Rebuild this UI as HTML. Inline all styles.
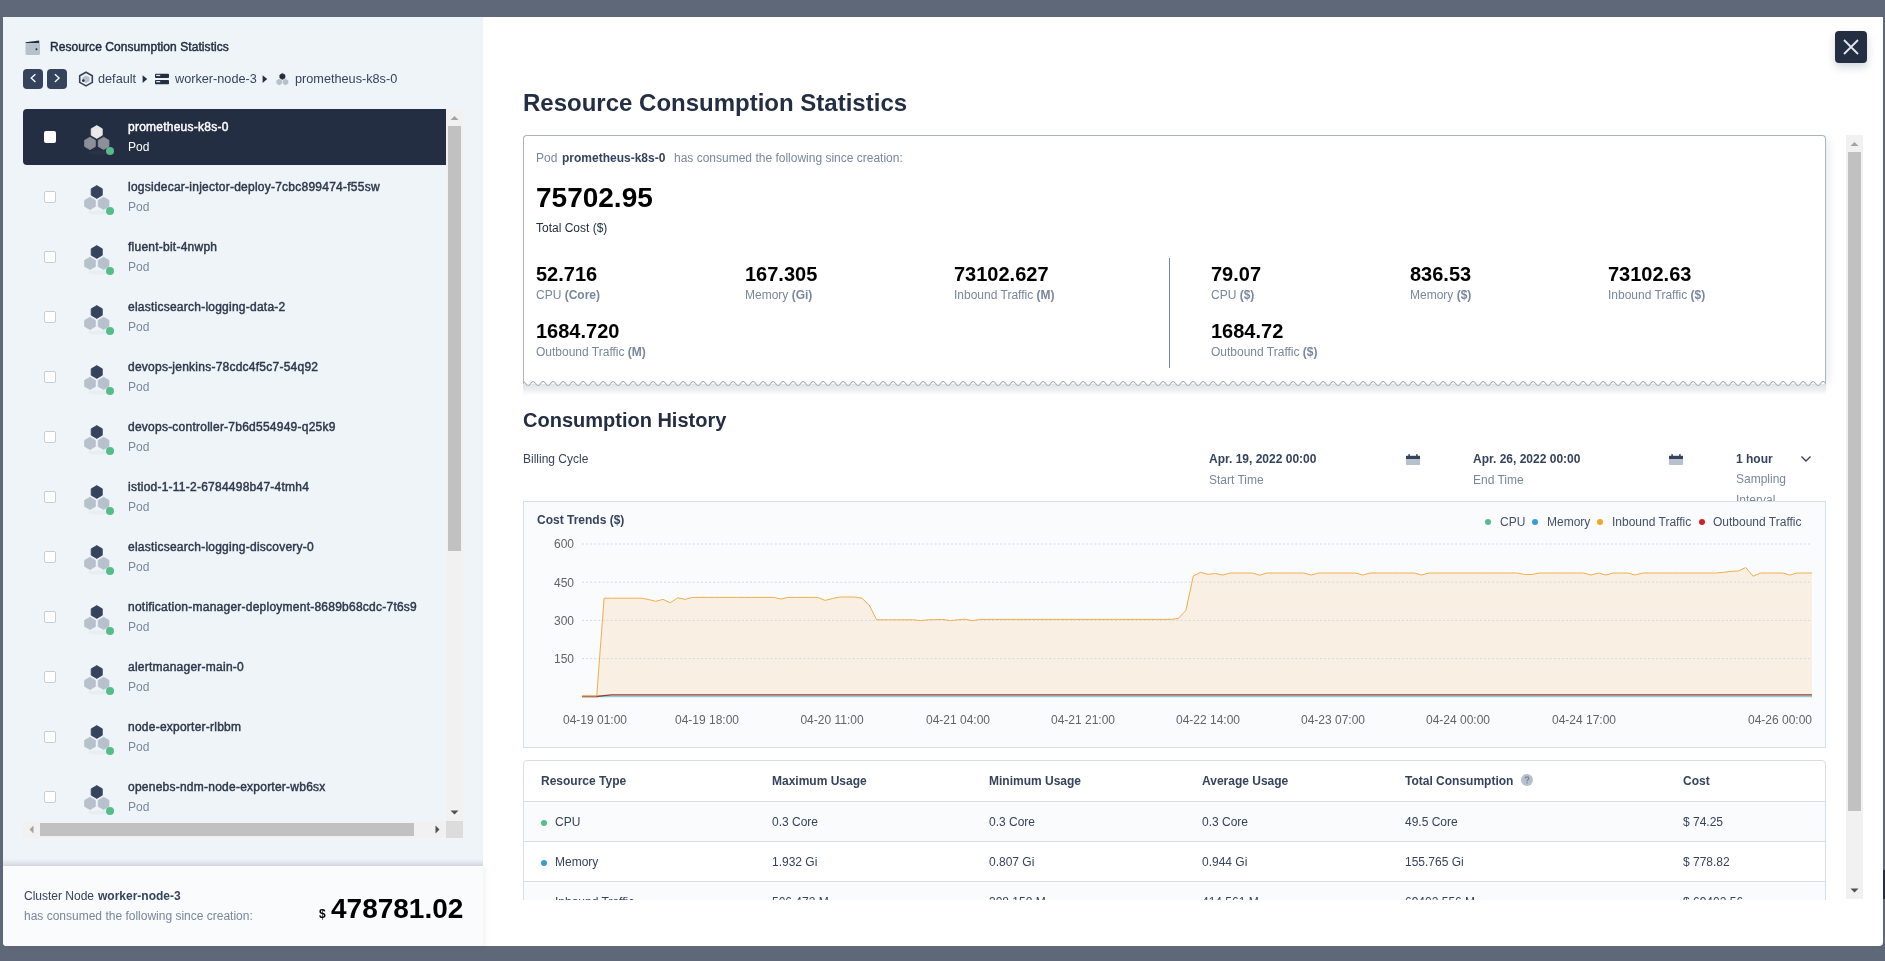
<!DOCTYPE html><html><head><meta charset="utf-8"><style>
html,body{margin:0;padding:0;}
body{width:1885px;height:961px;overflow:hidden;position:relative;background:#5f6878;font-family:"Liberation Sans", sans-serif;}
.t{position:absolute;white-space:pre;will-change:transform;}
.r{position:absolute;}
svg{position:absolute;overflow:visible;}
</style></head><body>
<div class="r" style="left:3px;top:17px;width:1880px;height:929px;background:#ffffff;border-radius:0 0 4px 4px;"></div><div class="r" style="left:3px;top:17px;width:480px;height:929px;background:#eff4f9;border-radius:0 0 0 4px;"></div><div class="r" style="left:1883px;top:870px;width:2px;height:29px;background:#242e42;"></div><svg style="left:25px;top:40px" width="16" height="16" viewBox="0 0 16 16">
<rect x="0.5" y="2.5" width="14.5" height="12.5" rx="1.5" fill="#b6c1cc"/>
<path d="M0.5 2.3 L14.2 0.5 L14.2 3 L0.5 3 Z" fill="#242e42"/>
<circle cx="11.5" cy="9.3" r="1" fill="#242e42"/>
</svg><div class="t" style="left:50.00px;top:40.59px;font-size:12px;line-height:12px;font-weight:400;color:#242e42;letter-spacing:0.07px;-webkit-text-stroke:0.45px #242e42;">Resource Consumption Statistics</div><div class="r" style="left:23px;top:69px;width:20px;height:20px;background:#36435c;border-radius:4px;"></div><svg style="left:23px;top:69px" width="20" height="20" viewBox="0 0 20 20"><path d="M12.4 5.2 L8.2 9.1 L12.4 13" fill="none" stroke="#fff" stroke-width="1.3"/></svg><div class="r" style="left:47px;top:69px;width:20px;height:20px;background:#36435c;border-radius:4px;"></div><svg style="left:47px;top:69px" width="20" height="20" viewBox="0 0 20 20"><path d="M7.9 5.2 L12.1 9.1 L7.9 13" fill="none" stroke="#fff" stroke-width="1.3"/></svg><svg style="left:78px;top:71px" width="16" height="16" viewBox="0 0 16 16">
<path d="M8 1.3 L14.3 4.8 L14.3 11.4 L8 14.9 L1.7 11.4 L1.7 4.8 Z" fill="none" stroke="#36435c" stroke-width="1.6" stroke-linejoin="round"/>
<path d="M8 4.5 L11.5 6.3 L11.5 10.2 L8 12 L4.5 10.2 L4.5 6.3 Z" fill="#b6c1cc"/>
<circle cx="5.3" cy="9.6" r="1.3" fill="#242e42"/>
</svg><div class="t" style="left:98.00px;top:72.85px;font-size:12.7px;line-height:12.7px;font-weight:400;color:#36435c;">default</div><svg style="left:142px;top:75.2px" width="6" height="8" viewBox="0 0 6 8"><path d="M0.6 0.2 L5.2 4.1 L0.6 8 Z" fill="#242e42"/></svg><svg style="left:155px;top:73px" width="14" height="12" viewBox="0 0 14 12">
<rect x="0" y="0.8" width="14" height="4.2" rx="0.8" fill="#242e42"/>
<rect x="0" y="7" width="14" height="4.2" rx="0.8" fill="#242e42"/>
<rect x="1.2" y="1.8" width="4" height="1.3" fill="#fff" opacity="0.85"/>
<rect x="1.2" y="8" width="4" height="1.3" fill="#fff" opacity="0.85"/>
</svg><div class="t" style="left:175.00px;top:72.85px;font-size:12.7px;line-height:12.7px;font-weight:400;color:#36435c;">worker-node-3</div><svg style="left:262px;top:75.2px" width="6" height="8" viewBox="0 0 6 8"><path d="M0.6 0.2 L5.2 4.1 L0.6 8 Z" fill="#242e42"/></svg><svg style="left:274px;top:70px" width="18" height="18" viewBox="0 0 18 18">
<path d="M8.40 3.40 L11.00 4.90 L11.00 7.90 L8.40 9.40 L5.80 7.90 L5.80 4.90 Z" fill="#242e42" stroke="#242e42" stroke-width="0.6" stroke-linejoin="round"/>
<path d="M5.20 9.10 L7.71 10.55 L7.71 13.45 L5.20 14.90 L2.69 13.45 L2.69 10.55 Z" fill="#b6c1cc" stroke="#b6c1cc" stroke-width="0.6" stroke-linejoin="round"/>
<path d="M11.50 9.10 L14.01 10.55 L14.01 13.45 L11.50 14.90 L8.99 13.45 L8.99 10.55 Z" fill="#b6c1cc" stroke="#b6c1cc" stroke-width="0.6" stroke-linejoin="round"/>
</svg><div class="t" style="left:294.50px;top:72.85px;font-size:12.7px;line-height:12.7px;font-weight:400;color:#36435c;">prometheus-k8s-0</div><div style="position:absolute;left:23px;top:109px;width:423px;height:712px;overflow:hidden;"><div class="r" style="left:0;top:0px;width:423px;height:56px;background:#242e42;border-radius:4px 0 0 4px;"></div><div class="r" style="left:21px;top:22px;width:12px;height:12px;background:#fff;border-radius:2px;"></div><svg style="left:56px;top:12px" width="40" height="40" viewBox="0 0 40 40">
<ellipse cx="20" cy="31.5" rx="11" ry="2" fill="#2a3447"/>
<path d="M17.75 4.60 L23.29 7.80 L23.29 14.20 L17.75 17.40 L12.21 14.20 L12.21 7.80 Z" fill="#e9e9ea" stroke="#e9e9ea" stroke-width="0.8" stroke-linejoin="round"/>
<path d="M11.00 16.20 L16.37 19.30 L16.37 25.50 L11.00 28.60 L5.63 25.50 L5.63 19.30 Z" fill="#8b9099" stroke="#8b9099" stroke-width="0.8" stroke-linejoin="round"/>
<path d="M24.60 16.20 L29.97 19.30 L29.97 25.50 L24.60 28.60 L19.23 25.50 L19.23 19.30 Z" fill="#8b9099" stroke="#8b9099" stroke-width="0.8" stroke-linejoin="round"/>
<circle cx="31" cy="30" r="4" fill="#55bc8a"/>
</svg><div class="t" style="left:105.00px;top:12.04px;font-size:12px;line-height:12px;font-weight:400;color:#ffffff;letter-spacing:0.24px;-webkit-text-stroke:0.45px #ffffff;">prometheus-k8s-0</div><div class="t" style="left:105.00px;top:32.44px;font-size:12px;line-height:12px;font-weight:400;color:#ffffff;">Pod</div><div class="r" style="left:21px;top:82px;width:10px;height:10px;background:#fff;border:1px solid #c7ced6;border-radius:2px;"></div><svg style="left:56px;top:72px" width="40" height="40" viewBox="0 0 40 40">
<ellipse cx="20" cy="31.5" rx="11" ry="2" fill="#e8edf2"/>
<path d="M17.75 4.60 L23.29 7.80 L23.29 14.20 L17.75 17.40 L12.21 14.20 L12.21 7.80 Z" fill="#36435c" stroke="#36435c" stroke-width="0.8" stroke-linejoin="round"/>
<path d="M11.00 16.20 L16.37 19.30 L16.37 25.50 L11.00 28.60 L5.63 25.50 L5.63 19.30 Z" fill="#b6c1cc" stroke="#b6c1cc" stroke-width="0.8" stroke-linejoin="round"/>
<path d="M24.60 16.20 L29.97 19.30 L29.97 25.50 L24.60 28.60 L19.23 25.50 L19.23 19.30 Z" fill="#b6c1cc" stroke="#b6c1cc" stroke-width="0.8" stroke-linejoin="round"/>
<circle cx="31" cy="30" r="4" fill="#55bc8a"/>
</svg><div class="t" style="left:105.00px;top:72.04px;font-size:12px;line-height:12px;font-weight:400;color:#2d384b;letter-spacing:0.24px;-webkit-text-stroke:0.45px #2d384b;">logsidecar-injector-deploy-7cbc899474-f55sw</div><div class="t" style="left:105.00px;top:92.44px;font-size:12px;line-height:12px;font-weight:400;color:#79879c;">Pod</div><div class="r" style="left:21px;top:142px;width:10px;height:10px;background:#fff;border:1px solid #c7ced6;border-radius:2px;"></div><svg style="left:56px;top:132px" width="40" height="40" viewBox="0 0 40 40">
<ellipse cx="20" cy="31.5" rx="11" ry="2" fill="#e8edf2"/>
<path d="M17.75 4.60 L23.29 7.80 L23.29 14.20 L17.75 17.40 L12.21 14.20 L12.21 7.80 Z" fill="#36435c" stroke="#36435c" stroke-width="0.8" stroke-linejoin="round"/>
<path d="M11.00 16.20 L16.37 19.30 L16.37 25.50 L11.00 28.60 L5.63 25.50 L5.63 19.30 Z" fill="#b6c1cc" stroke="#b6c1cc" stroke-width="0.8" stroke-linejoin="round"/>
<path d="M24.60 16.20 L29.97 19.30 L29.97 25.50 L24.60 28.60 L19.23 25.50 L19.23 19.30 Z" fill="#b6c1cc" stroke="#b6c1cc" stroke-width="0.8" stroke-linejoin="round"/>
<circle cx="31" cy="30" r="4" fill="#55bc8a"/>
</svg><div class="t" style="left:105.00px;top:132.04px;font-size:12px;line-height:12px;font-weight:400;color:#2d384b;letter-spacing:0.24px;-webkit-text-stroke:0.45px #2d384b;">fluent-bit-4nwph</div><div class="t" style="left:105.00px;top:152.44px;font-size:12px;line-height:12px;font-weight:400;color:#79879c;">Pod</div><div class="r" style="left:21px;top:202px;width:10px;height:10px;background:#fff;border:1px solid #c7ced6;border-radius:2px;"></div><svg style="left:56px;top:192px" width="40" height="40" viewBox="0 0 40 40">
<ellipse cx="20" cy="31.5" rx="11" ry="2" fill="#e8edf2"/>
<path d="M17.75 4.60 L23.29 7.80 L23.29 14.20 L17.75 17.40 L12.21 14.20 L12.21 7.80 Z" fill="#36435c" stroke="#36435c" stroke-width="0.8" stroke-linejoin="round"/>
<path d="M11.00 16.20 L16.37 19.30 L16.37 25.50 L11.00 28.60 L5.63 25.50 L5.63 19.30 Z" fill="#b6c1cc" stroke="#b6c1cc" stroke-width="0.8" stroke-linejoin="round"/>
<path d="M24.60 16.20 L29.97 19.30 L29.97 25.50 L24.60 28.60 L19.23 25.50 L19.23 19.30 Z" fill="#b6c1cc" stroke="#b6c1cc" stroke-width="0.8" stroke-linejoin="round"/>
<circle cx="31" cy="30" r="4" fill="#55bc8a"/>
</svg><div class="t" style="left:105.00px;top:192.04px;font-size:12px;line-height:12px;font-weight:400;color:#2d384b;letter-spacing:0.24px;-webkit-text-stroke:0.45px #2d384b;">elasticsearch-logging-data-2</div><div class="t" style="left:105.00px;top:212.44px;font-size:12px;line-height:12px;font-weight:400;color:#79879c;">Pod</div><div class="r" style="left:21px;top:262px;width:10px;height:10px;background:#fff;border:1px solid #c7ced6;border-radius:2px;"></div><svg style="left:56px;top:252px" width="40" height="40" viewBox="0 0 40 40">
<ellipse cx="20" cy="31.5" rx="11" ry="2" fill="#e8edf2"/>
<path d="M17.75 4.60 L23.29 7.80 L23.29 14.20 L17.75 17.40 L12.21 14.20 L12.21 7.80 Z" fill="#36435c" stroke="#36435c" stroke-width="0.8" stroke-linejoin="round"/>
<path d="M11.00 16.20 L16.37 19.30 L16.37 25.50 L11.00 28.60 L5.63 25.50 L5.63 19.30 Z" fill="#b6c1cc" stroke="#b6c1cc" stroke-width="0.8" stroke-linejoin="round"/>
<path d="M24.60 16.20 L29.97 19.30 L29.97 25.50 L24.60 28.60 L19.23 25.50 L19.23 19.30 Z" fill="#b6c1cc" stroke="#b6c1cc" stroke-width="0.8" stroke-linejoin="round"/>
<circle cx="31" cy="30" r="4" fill="#55bc8a"/>
</svg><div class="t" style="left:105.00px;top:252.04px;font-size:12px;line-height:12px;font-weight:400;color:#2d384b;letter-spacing:0.24px;-webkit-text-stroke:0.45px #2d384b;">devops-jenkins-78cdc4f5c7-54q92</div><div class="t" style="left:105.00px;top:272.44px;font-size:12px;line-height:12px;font-weight:400;color:#79879c;">Pod</div><div class="r" style="left:21px;top:322px;width:10px;height:10px;background:#fff;border:1px solid #c7ced6;border-radius:2px;"></div><svg style="left:56px;top:312px" width="40" height="40" viewBox="0 0 40 40">
<ellipse cx="20" cy="31.5" rx="11" ry="2" fill="#e8edf2"/>
<path d="M17.75 4.60 L23.29 7.80 L23.29 14.20 L17.75 17.40 L12.21 14.20 L12.21 7.80 Z" fill="#36435c" stroke="#36435c" stroke-width="0.8" stroke-linejoin="round"/>
<path d="M11.00 16.20 L16.37 19.30 L16.37 25.50 L11.00 28.60 L5.63 25.50 L5.63 19.30 Z" fill="#b6c1cc" stroke="#b6c1cc" stroke-width="0.8" stroke-linejoin="round"/>
<path d="M24.60 16.20 L29.97 19.30 L29.97 25.50 L24.60 28.60 L19.23 25.50 L19.23 19.30 Z" fill="#b6c1cc" stroke="#b6c1cc" stroke-width="0.8" stroke-linejoin="round"/>
<circle cx="31" cy="30" r="4" fill="#55bc8a"/>
</svg><div class="t" style="left:105.00px;top:312.04px;font-size:12px;line-height:12px;font-weight:400;color:#2d384b;letter-spacing:0.24px;-webkit-text-stroke:0.45px #2d384b;">devops-controller-7b6d554949-q25k9</div><div class="t" style="left:105.00px;top:332.44px;font-size:12px;line-height:12px;font-weight:400;color:#79879c;">Pod</div><div class="r" style="left:21px;top:382px;width:10px;height:10px;background:#fff;border:1px solid #c7ced6;border-radius:2px;"></div><svg style="left:56px;top:372px" width="40" height="40" viewBox="0 0 40 40">
<ellipse cx="20" cy="31.5" rx="11" ry="2" fill="#e8edf2"/>
<path d="M17.75 4.60 L23.29 7.80 L23.29 14.20 L17.75 17.40 L12.21 14.20 L12.21 7.80 Z" fill="#36435c" stroke="#36435c" stroke-width="0.8" stroke-linejoin="round"/>
<path d="M11.00 16.20 L16.37 19.30 L16.37 25.50 L11.00 28.60 L5.63 25.50 L5.63 19.30 Z" fill="#b6c1cc" stroke="#b6c1cc" stroke-width="0.8" stroke-linejoin="round"/>
<path d="M24.60 16.20 L29.97 19.30 L29.97 25.50 L24.60 28.60 L19.23 25.50 L19.23 19.30 Z" fill="#b6c1cc" stroke="#b6c1cc" stroke-width="0.8" stroke-linejoin="round"/>
<circle cx="31" cy="30" r="4" fill="#55bc8a"/>
</svg><div class="t" style="left:105.00px;top:372.04px;font-size:12px;line-height:12px;font-weight:400;color:#2d384b;letter-spacing:0.24px;-webkit-text-stroke:0.45px #2d384b;">istiod-1-11-2-6784498b47-4tmh4</div><div class="t" style="left:105.00px;top:392.44px;font-size:12px;line-height:12px;font-weight:400;color:#79879c;">Pod</div><div class="r" style="left:21px;top:442px;width:10px;height:10px;background:#fff;border:1px solid #c7ced6;border-radius:2px;"></div><svg style="left:56px;top:432px" width="40" height="40" viewBox="0 0 40 40">
<ellipse cx="20" cy="31.5" rx="11" ry="2" fill="#e8edf2"/>
<path d="M17.75 4.60 L23.29 7.80 L23.29 14.20 L17.75 17.40 L12.21 14.20 L12.21 7.80 Z" fill="#36435c" stroke="#36435c" stroke-width="0.8" stroke-linejoin="round"/>
<path d="M11.00 16.20 L16.37 19.30 L16.37 25.50 L11.00 28.60 L5.63 25.50 L5.63 19.30 Z" fill="#b6c1cc" stroke="#b6c1cc" stroke-width="0.8" stroke-linejoin="round"/>
<path d="M24.60 16.20 L29.97 19.30 L29.97 25.50 L24.60 28.60 L19.23 25.50 L19.23 19.30 Z" fill="#b6c1cc" stroke="#b6c1cc" stroke-width="0.8" stroke-linejoin="round"/>
<circle cx="31" cy="30" r="4" fill="#55bc8a"/>
</svg><div class="t" style="left:105.00px;top:432.04px;font-size:12px;line-height:12px;font-weight:400;color:#2d384b;letter-spacing:0.24px;-webkit-text-stroke:0.45px #2d384b;">elasticsearch-logging-discovery-0</div><div class="t" style="left:105.00px;top:452.44px;font-size:12px;line-height:12px;font-weight:400;color:#79879c;">Pod</div><div class="r" style="left:21px;top:502px;width:10px;height:10px;background:#fff;border:1px solid #c7ced6;border-radius:2px;"></div><svg style="left:56px;top:492px" width="40" height="40" viewBox="0 0 40 40">
<ellipse cx="20" cy="31.5" rx="11" ry="2" fill="#e8edf2"/>
<path d="M17.75 4.60 L23.29 7.80 L23.29 14.20 L17.75 17.40 L12.21 14.20 L12.21 7.80 Z" fill="#36435c" stroke="#36435c" stroke-width="0.8" stroke-linejoin="round"/>
<path d="M11.00 16.20 L16.37 19.30 L16.37 25.50 L11.00 28.60 L5.63 25.50 L5.63 19.30 Z" fill="#b6c1cc" stroke="#b6c1cc" stroke-width="0.8" stroke-linejoin="round"/>
<path d="M24.60 16.20 L29.97 19.30 L29.97 25.50 L24.60 28.60 L19.23 25.50 L19.23 19.30 Z" fill="#b6c1cc" stroke="#b6c1cc" stroke-width="0.8" stroke-linejoin="round"/>
<circle cx="31" cy="30" r="4" fill="#55bc8a"/>
</svg><div class="t" style="left:105.00px;top:492.04px;font-size:12px;line-height:12px;font-weight:400;color:#2d384b;letter-spacing:0.24px;-webkit-text-stroke:0.45px #2d384b;">notification-manager-deployment-8689b68cdc-7t6s9</div><div class="t" style="left:105.00px;top:512.44px;font-size:12px;line-height:12px;font-weight:400;color:#79879c;">Pod</div><div class="r" style="left:21px;top:562px;width:10px;height:10px;background:#fff;border:1px solid #c7ced6;border-radius:2px;"></div><svg style="left:56px;top:552px" width="40" height="40" viewBox="0 0 40 40">
<ellipse cx="20" cy="31.5" rx="11" ry="2" fill="#e8edf2"/>
<path d="M17.75 4.60 L23.29 7.80 L23.29 14.20 L17.75 17.40 L12.21 14.20 L12.21 7.80 Z" fill="#36435c" stroke="#36435c" stroke-width="0.8" stroke-linejoin="round"/>
<path d="M11.00 16.20 L16.37 19.30 L16.37 25.50 L11.00 28.60 L5.63 25.50 L5.63 19.30 Z" fill="#b6c1cc" stroke="#b6c1cc" stroke-width="0.8" stroke-linejoin="round"/>
<path d="M24.60 16.20 L29.97 19.30 L29.97 25.50 L24.60 28.60 L19.23 25.50 L19.23 19.30 Z" fill="#b6c1cc" stroke="#b6c1cc" stroke-width="0.8" stroke-linejoin="round"/>
<circle cx="31" cy="30" r="4" fill="#55bc8a"/>
</svg><div class="t" style="left:105.00px;top:552.04px;font-size:12px;line-height:12px;font-weight:400;color:#2d384b;letter-spacing:0.24px;-webkit-text-stroke:0.45px #2d384b;">alertmanager-main-0</div><div class="t" style="left:105.00px;top:572.44px;font-size:12px;line-height:12px;font-weight:400;color:#79879c;">Pod</div><div class="r" style="left:21px;top:622px;width:10px;height:10px;background:#fff;border:1px solid #c7ced6;border-radius:2px;"></div><svg style="left:56px;top:612px" width="40" height="40" viewBox="0 0 40 40">
<ellipse cx="20" cy="31.5" rx="11" ry="2" fill="#e8edf2"/>
<path d="M17.75 4.60 L23.29 7.80 L23.29 14.20 L17.75 17.40 L12.21 14.20 L12.21 7.80 Z" fill="#36435c" stroke="#36435c" stroke-width="0.8" stroke-linejoin="round"/>
<path d="M11.00 16.20 L16.37 19.30 L16.37 25.50 L11.00 28.60 L5.63 25.50 L5.63 19.30 Z" fill="#b6c1cc" stroke="#b6c1cc" stroke-width="0.8" stroke-linejoin="round"/>
<path d="M24.60 16.20 L29.97 19.30 L29.97 25.50 L24.60 28.60 L19.23 25.50 L19.23 19.30 Z" fill="#b6c1cc" stroke="#b6c1cc" stroke-width="0.8" stroke-linejoin="round"/>
<circle cx="31" cy="30" r="4" fill="#55bc8a"/>
</svg><div class="t" style="left:105.00px;top:612.04px;font-size:12px;line-height:12px;font-weight:400;color:#2d384b;letter-spacing:0.24px;-webkit-text-stroke:0.45px #2d384b;">node-exporter-rlbbm</div><div class="t" style="left:105.00px;top:632.44px;font-size:12px;line-height:12px;font-weight:400;color:#79879c;">Pod</div><div class="r" style="left:21px;top:682px;width:10px;height:10px;background:#fff;border:1px solid #c7ced6;border-radius:2px;"></div><svg style="left:56px;top:672px" width="40" height="40" viewBox="0 0 40 40">
<ellipse cx="20" cy="31.5" rx="11" ry="2" fill="#e8edf2"/>
<path d="M17.75 4.60 L23.29 7.80 L23.29 14.20 L17.75 17.40 L12.21 14.20 L12.21 7.80 Z" fill="#36435c" stroke="#36435c" stroke-width="0.8" stroke-linejoin="round"/>
<path d="M11.00 16.20 L16.37 19.30 L16.37 25.50 L11.00 28.60 L5.63 25.50 L5.63 19.30 Z" fill="#b6c1cc" stroke="#b6c1cc" stroke-width="0.8" stroke-linejoin="round"/>
<path d="M24.60 16.20 L29.97 19.30 L29.97 25.50 L24.60 28.60 L19.23 25.50 L19.23 19.30 Z" fill="#b6c1cc" stroke="#b6c1cc" stroke-width="0.8" stroke-linejoin="round"/>
<circle cx="31" cy="30" r="4" fill="#55bc8a"/>
</svg><div class="t" style="left:105.00px;top:672.04px;font-size:12px;line-height:12px;font-weight:400;color:#2d384b;letter-spacing:0.24px;-webkit-text-stroke:0.45px #2d384b;">openebs-ndm-node-exporter-wb6sx</div><div class="t" style="left:105.00px;top:692.44px;font-size:12px;line-height:12px;font-weight:400;color:#79879c;">Pod</div><div class="r" style="left:21px;top:742px;width:10px;height:10px;background:#fff;border:1px solid #c7ced6;border-radius:2px;"></div><svg style="left:56px;top:732px" width="40" height="40" viewBox="0 0 40 40">
<ellipse cx="20" cy="31.5" rx="11" ry="2" fill="#e8edf2"/>
<path d="M17.75 4.60 L23.29 7.80 L23.29 14.20 L17.75 17.40 L12.21 14.20 L12.21 7.80 Z" fill="#36435c" stroke="#36435c" stroke-width="0.8" stroke-linejoin="round"/>
<path d="M11.00 16.20 L16.37 19.30 L16.37 25.50 L11.00 28.60 L5.63 25.50 L5.63 19.30 Z" fill="#b6c1cc" stroke="#b6c1cc" stroke-width="0.8" stroke-linejoin="round"/>
<path d="M24.60 16.20 L29.97 19.30 L29.97 25.50 L24.60 28.60 L19.23 25.50 L19.23 19.30 Z" fill="#b6c1cc" stroke="#b6c1cc" stroke-width="0.8" stroke-linejoin="round"/>
<circle cx="31" cy="30" r="4" fill="#55bc8a"/>
</svg><div class="t" style="left:105.00px;top:732.04px;font-size:12px;line-height:12px;font-weight:400;color:#2d384b;letter-spacing:0.24px;-webkit-text-stroke:0.45px #2d384b;">kube-state-metrics-5bd4f7c7d-2xk9p</div><div class="t" style="left:105.00px;top:752.44px;font-size:12px;line-height:12px;font-weight:400;color:#79879c;">Pod</div></div><div class="r" style="left:446px;top:109px;width:17px;height:712px;background:#f1f1f1;"></div><div class="r" style="left:448px;top:126px;width:13px;height:425px;background:#c1c1c1;"></div><svg style="left:446px;top:109px" width="17" height="17" viewBox="0 0 17 17"><path d="M4.5 11 L8.5 7 L12.5 11 Z" fill="#a3a3a3"/></svg><svg style="left:446px;top:804px" width="17" height="17" viewBox="0 0 17 17"><path d="M4.5 6.5 L8.5 10.5 L12.5 6.5 Z" fill="#505050"/></svg><div class="r" style="left:23px;top:821px;width:423px;height:17px;background:#f1f1f1;"></div><div class="r" style="left:40px;top:823px;width:374px;height:13px;background:#c1c1c1;"></div><svg style="left:23px;top:821px" width="17" height="17" viewBox="0 0 17 17"><path d="M10.5 4.5 L6.5 8.5 L10.5 12.5 Z" fill="#a3a3a3"/></svg><svg style="left:429px;top:821px" width="17" height="17" viewBox="0 0 17 17"><path d="M6.5 4.5 L10.5 8.5 L6.5 12.5 Z" fill="#505050"/></svg><div class="r" style="left:446px;top:821px;width:17px;height:17px;background:#dcdcdc;"></div><div class="r" style="left:3px;top:859px;width:480px;height:7px;background:linear-gradient(to bottom, rgba(220,225,232,0), rgba(210,216,224,0.9));"></div><div class="r" style="left:3px;top:866px;width:480px;height:80px;background:#f9fbfd;border-radius:0 0 0 4px;box-shadow:3px 0 5px rgba(36,46,66,0.05);"></div><div class="t" style="left:23.50px;top:889.84px;font-size:12px;line-height:12px;font-weight:400;color:#36435c;">Cluster Node</div><div class="t" style="left:97.50px;top:889.84px;font-size:12px;line-height:12px;font-weight:700;color:#36435c;">worker-node-3</div><div class="t" style="left:23.50px;top:910.14px;font-size:12px;line-height:12px;font-weight:400;color:#79879c;">has consumed the following since creation:</div><div class="t" style="left:318.50px;top:908.44px;font-size:12px;line-height:12px;font-weight:700;color:#000;">$</div><div class="t" style="left:330.80px;top:894.89px;font-size:28px;line-height:28px;font-weight:700;color:#000;">478781.02</div><div class="r" style="left:1835px;top:31px;width:32px;height:32px;background:#242e42;border-radius:4px;box-shadow:0 4px 8px rgba(36,46,66,0.2);"></div><svg style="left:1835px;top:31px" width="32" height="32" viewBox="0 0 32 32"><path d="M9 9 L23 23 M23 9 L9 23" stroke="#e3e7ec" stroke-width="1.8" fill="none"/></svg><div class="t" style="left:523.20px;top:90.68px;font-size:24px;line-height:24px;font-weight:700;color:#242e42;">Resource Consumption Statistics</div><div style="position:absolute;left:483px;top:135px;width:1363px;height:765px;overflow:hidden;"><div class="r" style="left:40px;top:0px;width:1303px;height:250px;background:#fff;border:1px solid #abb3bd;border-bottom:none;border-radius:4px 4px 0 0;box-shadow:6px 2px 8px -3px rgba(36,46,66,0.10);box-sizing:border-box;"></div><svg style="left:40px;top:246px;overflow:hidden" width="1303" height="16" viewBox="0 0 1303 16"><defs><linearGradient id="sh" x1="0" y1="0" x2="0" y2="1"><stop offset="0" stop-color="#dfe3e8"/><stop offset="0.5" stop-color="#eef0f3"/><stop offset="1" stop-color="#ffffff" stop-opacity="0"/></linearGradient></defs><rect x="0" y="3" width="1303" height="13" fill="url(#sh)"/><path d="M0.1 0.5 C2.10 0.5 3.10 4.5 5.10 4.5 C7.10 4.5 8.10 0.5 10.10 0.5 C12.10 0.5 13.10 4.5 15.10 4.5 C17.10 4.5 18.10 0.5 20.10 0.5 C22.10 0.5 23.10 4.5 25.10 4.5 C27.10 4.5 28.10 0.5 30.10 0.5 C32.10 0.5 33.10 4.5 35.10 4.5 C37.10 4.5 38.10 0.5 40.10 0.5 C42.10 0.5 43.10 4.5 45.10 4.5 C47.10 4.5 48.10 0.5 50.10 0.5 C52.10 0.5 53.10 4.5 55.10 4.5 C57.10 4.5 58.10 0.5 60.10 0.5 C62.10 0.5 63.10 4.5 65.10 4.5 C67.10 4.5 68.10 0.5 70.10 0.5 C72.10 0.5 73.10 4.5 75.10 4.5 C77.10 4.5 78.10 0.5 80.10 0.5 C82.10 0.5 83.10 4.5 85.10 4.5 C87.10 4.5 88.10 0.5 90.10 0.5 C92.10 0.5 93.10 4.5 95.10 4.5 C97.10 4.5 98.10 0.5 100.10 0.5 C102.10 0.5 103.10 4.5 105.10 4.5 C107.10 4.5 108.10 0.5 110.10 0.5 C112.10 0.5 113.10 4.5 115.10 4.5 C117.10 4.5 118.10 0.5 120.10 0.5 C122.10 0.5 123.10 4.5 125.10 4.5 C127.10 4.5 128.10 0.5 130.10 0.5 C132.10 0.5 133.10 4.5 135.10 4.5 C137.10 4.5 138.10 0.5 140.10 0.5 C142.10 0.5 143.10 4.5 145.10 4.5 C147.10 4.5 148.10 0.5 150.10 0.5 C152.10 0.5 153.10 4.5 155.10 4.5 C157.10 4.5 158.10 0.5 160.10 0.5 C162.10 0.5 163.10 4.5 165.10 4.5 C167.10 4.5 168.10 0.5 170.10 0.5 C172.10 0.5 173.10 4.5 175.10 4.5 C177.10 4.5 178.10 0.5 180.10 0.5 C182.10 0.5 183.10 4.5 185.10 4.5 C187.10 4.5 188.10 0.5 190.10 0.5 C192.10 0.5 193.10 4.5 195.10 4.5 C197.10 4.5 198.10 0.5 200.10 0.5 C202.10 0.5 203.10 4.5 205.10 4.5 C207.10 4.5 208.10 0.5 210.10 0.5 C212.10 0.5 213.10 4.5 215.10 4.5 C217.10 4.5 218.10 0.5 220.10 0.5 C222.10 0.5 223.10 4.5 225.10 4.5 C227.10 4.5 228.10 0.5 230.10 0.5 C232.10 0.5 233.10 4.5 235.10 4.5 C237.10 4.5 238.10 0.5 240.10 0.5 C242.10 0.5 243.10 4.5 245.10 4.5 C247.10 4.5 248.10 0.5 250.10 0.5 C252.10 0.5 253.10 4.5 255.10 4.5 C257.10 4.5 258.10 0.5 260.10 0.5 C262.10 0.5 263.10 4.5 265.10 4.5 C267.10 4.5 268.10 0.5 270.10 0.5 C272.10 0.5 273.10 4.5 275.10 4.5 C277.10 4.5 278.10 0.5 280.10 0.5 C282.10 0.5 283.10 4.5 285.10 4.5 C287.10 4.5 288.10 0.5 290.10 0.5 C292.10 0.5 293.10 4.5 295.10 4.5 C297.10 4.5 298.10 0.5 300.10 0.5 C302.10 0.5 303.10 4.5 305.10 4.5 C307.10 4.5 308.10 0.5 310.10 0.5 C312.10 0.5 313.10 4.5 315.10 4.5 C317.10 4.5 318.10 0.5 320.10 0.5 C322.10 0.5 323.10 4.5 325.10 4.5 C327.10 4.5 328.10 0.5 330.10 0.5 C332.10 0.5 333.10 4.5 335.10 4.5 C337.10 4.5 338.10 0.5 340.10 0.5 C342.10 0.5 343.10 4.5 345.10 4.5 C347.10 4.5 348.10 0.5 350.10 0.5 C352.10 0.5 353.10 4.5 355.10 4.5 C357.10 4.5 358.10 0.5 360.10 0.5 C362.10 0.5 363.10 4.5 365.10 4.5 C367.10 4.5 368.10 0.5 370.10 0.5 C372.10 0.5 373.10 4.5 375.10 4.5 C377.10 4.5 378.10 0.5 380.10 0.5 C382.10 0.5 383.10 4.5 385.10 4.5 C387.10 4.5 388.10 0.5 390.10 0.5 C392.10 0.5 393.10 4.5 395.10 4.5 C397.10 4.5 398.10 0.5 400.10 0.5 C402.10 0.5 403.10 4.5 405.10 4.5 C407.10 4.5 408.10 0.5 410.10 0.5 C412.10 0.5 413.10 4.5 415.10 4.5 C417.10 4.5 418.10 0.5 420.10 0.5 C422.10 0.5 423.10 4.5 425.10 4.5 C427.10 4.5 428.10 0.5 430.10 0.5 C432.10 0.5 433.10 4.5 435.10 4.5 C437.10 4.5 438.10 0.5 440.10 0.5 C442.10 0.5 443.10 4.5 445.10 4.5 C447.10 4.5 448.10 0.5 450.10 0.5 C452.10 0.5 453.10 4.5 455.10 4.5 C457.10 4.5 458.10 0.5 460.10 0.5 C462.10 0.5 463.10 4.5 465.10 4.5 C467.10 4.5 468.10 0.5 470.10 0.5 C472.10 0.5 473.10 4.5 475.10 4.5 C477.10 4.5 478.10 0.5 480.10 0.5 C482.10 0.5 483.10 4.5 485.10 4.5 C487.10 4.5 488.10 0.5 490.10 0.5 C492.10 0.5 493.10 4.5 495.10 4.5 C497.10 4.5 498.10 0.5 500.10 0.5 C502.10 0.5 503.10 4.5 505.10 4.5 C507.10 4.5 508.10 0.5 510.10 0.5 C512.10 0.5 513.10 4.5 515.10 4.5 C517.10 4.5 518.10 0.5 520.10 0.5 C522.10 0.5 523.10 4.5 525.10 4.5 C527.10 4.5 528.10 0.5 530.10 0.5 C532.10 0.5 533.10 4.5 535.10 4.5 C537.10 4.5 538.10 0.5 540.10 0.5 C542.10 0.5 543.10 4.5 545.10 4.5 C547.10 4.5 548.10 0.5 550.10 0.5 C552.10 0.5 553.10 4.5 555.10 4.5 C557.10 4.5 558.10 0.5 560.10 0.5 C562.10 0.5 563.10 4.5 565.10 4.5 C567.10 4.5 568.10 0.5 570.10 0.5 C572.10 0.5 573.10 4.5 575.10 4.5 C577.10 4.5 578.10 0.5 580.10 0.5 C582.10 0.5 583.10 4.5 585.10 4.5 C587.10 4.5 588.10 0.5 590.10 0.5 C592.10 0.5 593.10 4.5 595.10 4.5 C597.10 4.5 598.10 0.5 600.10 0.5 C602.10 0.5 603.10 4.5 605.10 4.5 C607.10 4.5 608.10 0.5 610.10 0.5 C612.10 0.5 613.10 4.5 615.10 4.5 C617.10 4.5 618.10 0.5 620.10 0.5 C622.10 0.5 623.10 4.5 625.10 4.5 C627.10 4.5 628.10 0.5 630.10 0.5 C632.10 0.5 633.10 4.5 635.10 4.5 C637.10 4.5 638.10 0.5 640.10 0.5 C642.10 0.5 643.10 4.5 645.10 4.5 C647.10 4.5 648.10 0.5 650.10 0.5 C652.10 0.5 653.10 4.5 655.10 4.5 C657.10 4.5 658.10 0.5 660.10 0.5 C662.10 0.5 663.10 4.5 665.10 4.5 C667.10 4.5 668.10 0.5 670.10 0.5 C672.10 0.5 673.10 4.5 675.10 4.5 C677.10 4.5 678.10 0.5 680.10 0.5 C682.10 0.5 683.10 4.5 685.10 4.5 C687.10 4.5 688.10 0.5 690.10 0.5 C692.10 0.5 693.10 4.5 695.10 4.5 C697.10 4.5 698.10 0.5 700.10 0.5 C702.10 0.5 703.10 4.5 705.10 4.5 C707.10 4.5 708.10 0.5 710.10 0.5 C712.10 0.5 713.10 4.5 715.10 4.5 C717.10 4.5 718.10 0.5 720.10 0.5 C722.10 0.5 723.10 4.5 725.10 4.5 C727.10 4.5 728.10 0.5 730.10 0.5 C732.10 0.5 733.10 4.5 735.10 4.5 C737.10 4.5 738.10 0.5 740.10 0.5 C742.10 0.5 743.10 4.5 745.10 4.5 C747.10 4.5 748.10 0.5 750.10 0.5 C752.10 0.5 753.10 4.5 755.10 4.5 C757.10 4.5 758.10 0.5 760.10 0.5 C762.10 0.5 763.10 4.5 765.10 4.5 C767.10 4.5 768.10 0.5 770.10 0.5 C772.10 0.5 773.10 4.5 775.10 4.5 C777.10 4.5 778.10 0.5 780.10 0.5 C782.10 0.5 783.10 4.5 785.10 4.5 C787.10 4.5 788.10 0.5 790.10 0.5 C792.10 0.5 793.10 4.5 795.10 4.5 C797.10 4.5 798.10 0.5 800.10 0.5 C802.10 0.5 803.10 4.5 805.10 4.5 C807.10 4.5 808.10 0.5 810.10 0.5 C812.10 0.5 813.10 4.5 815.10 4.5 C817.10 4.5 818.10 0.5 820.10 0.5 C822.10 0.5 823.10 4.5 825.10 4.5 C827.10 4.5 828.10 0.5 830.10 0.5 C832.10 0.5 833.10 4.5 835.10 4.5 C837.10 4.5 838.10 0.5 840.10 0.5 C842.10 0.5 843.10 4.5 845.10 4.5 C847.10 4.5 848.10 0.5 850.10 0.5 C852.10 0.5 853.10 4.5 855.10 4.5 C857.10 4.5 858.10 0.5 860.10 0.5 C862.10 0.5 863.10 4.5 865.10 4.5 C867.10 4.5 868.10 0.5 870.10 0.5 C872.10 0.5 873.10 4.5 875.10 4.5 C877.10 4.5 878.10 0.5 880.10 0.5 C882.10 0.5 883.10 4.5 885.10 4.5 C887.10 4.5 888.10 0.5 890.10 0.5 C892.10 0.5 893.10 4.5 895.10 4.5 C897.10 4.5 898.10 0.5 900.10 0.5 C902.10 0.5 903.10 4.5 905.10 4.5 C907.10 4.5 908.10 0.5 910.10 0.5 C912.10 0.5 913.10 4.5 915.10 4.5 C917.10 4.5 918.10 0.5 920.10 0.5 C922.10 0.5 923.10 4.5 925.10 4.5 C927.10 4.5 928.10 0.5 930.10 0.5 C932.10 0.5 933.10 4.5 935.10 4.5 C937.10 4.5 938.10 0.5 940.10 0.5 C942.10 0.5 943.10 4.5 945.10 4.5 C947.10 4.5 948.10 0.5 950.10 0.5 C952.10 0.5 953.10 4.5 955.10 4.5 C957.10 4.5 958.10 0.5 960.10 0.5 C962.10 0.5 963.10 4.5 965.10 4.5 C967.10 4.5 968.10 0.5 970.10 0.5 C972.10 0.5 973.10 4.5 975.10 4.5 C977.10 4.5 978.10 0.5 980.10 0.5 C982.10 0.5 983.10 4.5 985.10 4.5 C987.10 4.5 988.10 0.5 990.10 0.5 C992.10 0.5 993.10 4.5 995.10 4.5 C997.10 4.5 998.10 0.5 1000.10 0.5 C1002.10 0.5 1003.10 4.5 1005.10 4.5 C1007.10 4.5 1008.10 0.5 1010.10 0.5 C1012.10 0.5 1013.10 4.5 1015.10 4.5 C1017.10 4.5 1018.10 0.5 1020.10 0.5 C1022.10 0.5 1023.10 4.5 1025.10 4.5 C1027.10 4.5 1028.10 0.5 1030.10 0.5 C1032.10 0.5 1033.10 4.5 1035.10 4.5 C1037.10 4.5 1038.10 0.5 1040.10 0.5 C1042.10 0.5 1043.10 4.5 1045.10 4.5 C1047.10 4.5 1048.10 0.5 1050.10 0.5 C1052.10 0.5 1053.10 4.5 1055.10 4.5 C1057.10 4.5 1058.10 0.5 1060.10 0.5 C1062.10 0.5 1063.10 4.5 1065.10 4.5 C1067.10 4.5 1068.10 0.5 1070.10 0.5 C1072.10 0.5 1073.10 4.5 1075.10 4.5 C1077.10 4.5 1078.10 0.5 1080.10 0.5 C1082.10 0.5 1083.10 4.5 1085.10 4.5 C1087.10 4.5 1088.10 0.5 1090.10 0.5 C1092.10 0.5 1093.10 4.5 1095.10 4.5 C1097.10 4.5 1098.10 0.5 1100.10 0.5 C1102.10 0.5 1103.10 4.5 1105.10 4.5 C1107.10 4.5 1108.10 0.5 1110.10 0.5 C1112.10 0.5 1113.10 4.5 1115.10 4.5 C1117.10 4.5 1118.10 0.5 1120.10 0.5 C1122.10 0.5 1123.10 4.5 1125.10 4.5 C1127.10 4.5 1128.10 0.5 1130.10 0.5 C1132.10 0.5 1133.10 4.5 1135.10 4.5 C1137.10 4.5 1138.10 0.5 1140.10 0.5 C1142.10 0.5 1143.10 4.5 1145.10 4.5 C1147.10 4.5 1148.10 0.5 1150.10 0.5 C1152.10 0.5 1153.10 4.5 1155.10 4.5 C1157.10 4.5 1158.10 0.5 1160.10 0.5 C1162.10 0.5 1163.10 4.5 1165.10 4.5 C1167.10 4.5 1168.10 0.5 1170.10 0.5 C1172.10 0.5 1173.10 4.5 1175.10 4.5 C1177.10 4.5 1178.10 0.5 1180.10 0.5 C1182.10 0.5 1183.10 4.5 1185.10 4.5 C1187.10 4.5 1188.10 0.5 1190.10 0.5 C1192.10 0.5 1193.10 4.5 1195.10 4.5 C1197.10 4.5 1198.10 0.5 1200.10 0.5 C1202.10 0.5 1203.10 4.5 1205.10 4.5 C1207.10 4.5 1208.10 0.5 1210.10 0.5 C1212.10 0.5 1213.10 4.5 1215.10 4.5 C1217.10 4.5 1218.10 0.5 1220.10 0.5 C1222.10 0.5 1223.10 4.5 1225.10 4.5 C1227.10 4.5 1228.10 0.5 1230.10 0.5 C1232.10 0.5 1233.10 4.5 1235.10 4.5 C1237.10 4.5 1238.10 0.5 1240.10 0.5 C1242.10 0.5 1243.10 4.5 1245.10 4.5 C1247.10 4.5 1248.10 0.5 1250.10 0.5 C1252.10 0.5 1253.10 4.5 1255.10 4.5 C1257.10 4.5 1258.10 0.5 1260.10 0.5 C1262.10 0.5 1263.10 4.5 1265.10 4.5 C1267.10 4.5 1268.10 0.5 1270.10 0.5 C1272.10 0.5 1273.10 4.5 1275.10 4.5 C1277.10 4.5 1278.10 0.5 1280.10 0.5 C1282.10 0.5 1283.10 4.5 1285.10 4.5 C1287.10 4.5 1288.10 0.5 1290.10 0.5 C1292.10 0.5 1293.10 4.5 1295.10 4.5 C1297.10 4.5 1298.10 0.5 1300.10 0.5 C1302.10 0.5 1303.10 4.5 1305.10 4.5 C1307.10 4.5 1308.10 0.5 1310.10 0.5 L1310 0 L0 0 Z" fill="#fff"/><path d="M0.1 0.5 C2.10 0.5 3.10 4.5 5.10 4.5 C7.10 4.5 8.10 0.5 10.10 0.5 C12.10 0.5 13.10 4.5 15.10 4.5 C17.10 4.5 18.10 0.5 20.10 0.5 C22.10 0.5 23.10 4.5 25.10 4.5 C27.10 4.5 28.10 0.5 30.10 0.5 C32.10 0.5 33.10 4.5 35.10 4.5 C37.10 4.5 38.10 0.5 40.10 0.5 C42.10 0.5 43.10 4.5 45.10 4.5 C47.10 4.5 48.10 0.5 50.10 0.5 C52.10 0.5 53.10 4.5 55.10 4.5 C57.10 4.5 58.10 0.5 60.10 0.5 C62.10 0.5 63.10 4.5 65.10 4.5 C67.10 4.5 68.10 0.5 70.10 0.5 C72.10 0.5 73.10 4.5 75.10 4.5 C77.10 4.5 78.10 0.5 80.10 0.5 C82.10 0.5 83.10 4.5 85.10 4.5 C87.10 4.5 88.10 0.5 90.10 0.5 C92.10 0.5 93.10 4.5 95.10 4.5 C97.10 4.5 98.10 0.5 100.10 0.5 C102.10 0.5 103.10 4.5 105.10 4.5 C107.10 4.5 108.10 0.5 110.10 0.5 C112.10 0.5 113.10 4.5 115.10 4.5 C117.10 4.5 118.10 0.5 120.10 0.5 C122.10 0.5 123.10 4.5 125.10 4.5 C127.10 4.5 128.10 0.5 130.10 0.5 C132.10 0.5 133.10 4.5 135.10 4.5 C137.10 4.5 138.10 0.5 140.10 0.5 C142.10 0.5 143.10 4.5 145.10 4.5 C147.10 4.5 148.10 0.5 150.10 0.5 C152.10 0.5 153.10 4.5 155.10 4.5 C157.10 4.5 158.10 0.5 160.10 0.5 C162.10 0.5 163.10 4.5 165.10 4.5 C167.10 4.5 168.10 0.5 170.10 0.5 C172.10 0.5 173.10 4.5 175.10 4.5 C177.10 4.5 178.10 0.5 180.10 0.5 C182.10 0.5 183.10 4.5 185.10 4.5 C187.10 4.5 188.10 0.5 190.10 0.5 C192.10 0.5 193.10 4.5 195.10 4.5 C197.10 4.5 198.10 0.5 200.10 0.5 C202.10 0.5 203.10 4.5 205.10 4.5 C207.10 4.5 208.10 0.5 210.10 0.5 C212.10 0.5 213.10 4.5 215.10 4.5 C217.10 4.5 218.10 0.5 220.10 0.5 C222.10 0.5 223.10 4.5 225.10 4.5 C227.10 4.5 228.10 0.5 230.10 0.5 C232.10 0.5 233.10 4.5 235.10 4.5 C237.10 4.5 238.10 0.5 240.10 0.5 C242.10 0.5 243.10 4.5 245.10 4.5 C247.10 4.5 248.10 0.5 250.10 0.5 C252.10 0.5 253.10 4.5 255.10 4.5 C257.10 4.5 258.10 0.5 260.10 0.5 C262.10 0.5 263.10 4.5 265.10 4.5 C267.10 4.5 268.10 0.5 270.10 0.5 C272.10 0.5 273.10 4.5 275.10 4.5 C277.10 4.5 278.10 0.5 280.10 0.5 C282.10 0.5 283.10 4.5 285.10 4.5 C287.10 4.5 288.10 0.5 290.10 0.5 C292.10 0.5 293.10 4.5 295.10 4.5 C297.10 4.5 298.10 0.5 300.10 0.5 C302.10 0.5 303.10 4.5 305.10 4.5 C307.10 4.5 308.10 0.5 310.10 0.5 C312.10 0.5 313.10 4.5 315.10 4.5 C317.10 4.5 318.10 0.5 320.10 0.5 C322.10 0.5 323.10 4.5 325.10 4.5 C327.10 4.5 328.10 0.5 330.10 0.5 C332.10 0.5 333.10 4.5 335.10 4.5 C337.10 4.5 338.10 0.5 340.10 0.5 C342.10 0.5 343.10 4.5 345.10 4.5 C347.10 4.5 348.10 0.5 350.10 0.5 C352.10 0.5 353.10 4.5 355.10 4.5 C357.10 4.5 358.10 0.5 360.10 0.5 C362.10 0.5 363.10 4.5 365.10 4.5 C367.10 4.5 368.10 0.5 370.10 0.5 C372.10 0.5 373.10 4.5 375.10 4.5 C377.10 4.5 378.10 0.5 380.10 0.5 C382.10 0.5 383.10 4.5 385.10 4.5 C387.10 4.5 388.10 0.5 390.10 0.5 C392.10 0.5 393.10 4.5 395.10 4.5 C397.10 4.5 398.10 0.5 400.10 0.5 C402.10 0.5 403.10 4.5 405.10 4.5 C407.10 4.5 408.10 0.5 410.10 0.5 C412.10 0.5 413.10 4.5 415.10 4.5 C417.10 4.5 418.10 0.5 420.10 0.5 C422.10 0.5 423.10 4.5 425.10 4.5 C427.10 4.5 428.10 0.5 430.10 0.5 C432.10 0.5 433.10 4.5 435.10 4.5 C437.10 4.5 438.10 0.5 440.10 0.5 C442.10 0.5 443.10 4.5 445.10 4.5 C447.10 4.5 448.10 0.5 450.10 0.5 C452.10 0.5 453.10 4.5 455.10 4.5 C457.10 4.5 458.10 0.5 460.10 0.5 C462.10 0.5 463.10 4.5 465.10 4.5 C467.10 4.5 468.10 0.5 470.10 0.5 C472.10 0.5 473.10 4.5 475.10 4.5 C477.10 4.5 478.10 0.5 480.10 0.5 C482.10 0.5 483.10 4.5 485.10 4.5 C487.10 4.5 488.10 0.5 490.10 0.5 C492.10 0.5 493.10 4.5 495.10 4.5 C497.10 4.5 498.10 0.5 500.10 0.5 C502.10 0.5 503.10 4.5 505.10 4.5 C507.10 4.5 508.10 0.5 510.10 0.5 C512.10 0.5 513.10 4.5 515.10 4.5 C517.10 4.5 518.10 0.5 520.10 0.5 C522.10 0.5 523.10 4.5 525.10 4.5 C527.10 4.5 528.10 0.5 530.10 0.5 C532.10 0.5 533.10 4.5 535.10 4.5 C537.10 4.5 538.10 0.5 540.10 0.5 C542.10 0.5 543.10 4.5 545.10 4.5 C547.10 4.5 548.10 0.5 550.10 0.5 C552.10 0.5 553.10 4.5 555.10 4.5 C557.10 4.5 558.10 0.5 560.10 0.5 C562.10 0.5 563.10 4.5 565.10 4.5 C567.10 4.5 568.10 0.5 570.10 0.5 C572.10 0.5 573.10 4.5 575.10 4.5 C577.10 4.5 578.10 0.5 580.10 0.5 C582.10 0.5 583.10 4.5 585.10 4.5 C587.10 4.5 588.10 0.5 590.10 0.5 C592.10 0.5 593.10 4.5 595.10 4.5 C597.10 4.5 598.10 0.5 600.10 0.5 C602.10 0.5 603.10 4.5 605.10 4.5 C607.10 4.5 608.10 0.5 610.10 0.5 C612.10 0.5 613.10 4.5 615.10 4.5 C617.10 4.5 618.10 0.5 620.10 0.5 C622.10 0.5 623.10 4.5 625.10 4.5 C627.10 4.5 628.10 0.5 630.10 0.5 C632.10 0.5 633.10 4.5 635.10 4.5 C637.10 4.5 638.10 0.5 640.10 0.5 C642.10 0.5 643.10 4.5 645.10 4.5 C647.10 4.5 648.10 0.5 650.10 0.5 C652.10 0.5 653.10 4.5 655.10 4.5 C657.10 4.5 658.10 0.5 660.10 0.5 C662.10 0.5 663.10 4.5 665.10 4.5 C667.10 4.5 668.10 0.5 670.10 0.5 C672.10 0.5 673.10 4.5 675.10 4.5 C677.10 4.5 678.10 0.5 680.10 0.5 C682.10 0.5 683.10 4.5 685.10 4.5 C687.10 4.5 688.10 0.5 690.10 0.5 C692.10 0.5 693.10 4.5 695.10 4.5 C697.10 4.5 698.10 0.5 700.10 0.5 C702.10 0.5 703.10 4.5 705.10 4.5 C707.10 4.5 708.10 0.5 710.10 0.5 C712.10 0.5 713.10 4.5 715.10 4.5 C717.10 4.5 718.10 0.5 720.10 0.5 C722.10 0.5 723.10 4.5 725.10 4.5 C727.10 4.5 728.10 0.5 730.10 0.5 C732.10 0.5 733.10 4.5 735.10 4.5 C737.10 4.5 738.10 0.5 740.10 0.5 C742.10 0.5 743.10 4.5 745.10 4.5 C747.10 4.5 748.10 0.5 750.10 0.5 C752.10 0.5 753.10 4.5 755.10 4.5 C757.10 4.5 758.10 0.5 760.10 0.5 C762.10 0.5 763.10 4.5 765.10 4.5 C767.10 4.5 768.10 0.5 770.10 0.5 C772.10 0.5 773.10 4.5 775.10 4.5 C777.10 4.5 778.10 0.5 780.10 0.5 C782.10 0.5 783.10 4.5 785.10 4.5 C787.10 4.5 788.10 0.5 790.10 0.5 C792.10 0.5 793.10 4.5 795.10 4.5 C797.10 4.5 798.10 0.5 800.10 0.5 C802.10 0.5 803.10 4.5 805.10 4.5 C807.10 4.5 808.10 0.5 810.10 0.5 C812.10 0.5 813.10 4.5 815.10 4.5 C817.10 4.5 818.10 0.5 820.10 0.5 C822.10 0.5 823.10 4.5 825.10 4.5 C827.10 4.5 828.10 0.5 830.10 0.5 C832.10 0.5 833.10 4.5 835.10 4.5 C837.10 4.5 838.10 0.5 840.10 0.5 C842.10 0.5 843.10 4.5 845.10 4.5 C847.10 4.5 848.10 0.5 850.10 0.5 C852.10 0.5 853.10 4.5 855.10 4.5 C857.10 4.5 858.10 0.5 860.10 0.5 C862.10 0.5 863.10 4.5 865.10 4.5 C867.10 4.5 868.10 0.5 870.10 0.5 C872.10 0.5 873.10 4.5 875.10 4.5 C877.10 4.5 878.10 0.5 880.10 0.5 C882.10 0.5 883.10 4.5 885.10 4.5 C887.10 4.5 888.10 0.5 890.10 0.5 C892.10 0.5 893.10 4.5 895.10 4.5 C897.10 4.5 898.10 0.5 900.10 0.5 C902.10 0.5 903.10 4.5 905.10 4.5 C907.10 4.5 908.10 0.5 910.10 0.5 C912.10 0.5 913.10 4.5 915.10 4.5 C917.10 4.5 918.10 0.5 920.10 0.5 C922.10 0.5 923.10 4.5 925.10 4.5 C927.10 4.5 928.10 0.5 930.10 0.5 C932.10 0.5 933.10 4.5 935.10 4.5 C937.10 4.5 938.10 0.5 940.10 0.5 C942.10 0.5 943.10 4.5 945.10 4.5 C947.10 4.5 948.10 0.5 950.10 0.5 C952.10 0.5 953.10 4.5 955.10 4.5 C957.10 4.5 958.10 0.5 960.10 0.5 C962.10 0.5 963.10 4.5 965.10 4.5 C967.10 4.5 968.10 0.5 970.10 0.5 C972.10 0.5 973.10 4.5 975.10 4.5 C977.10 4.5 978.10 0.5 980.10 0.5 C982.10 0.5 983.10 4.5 985.10 4.5 C987.10 4.5 988.10 0.5 990.10 0.5 C992.10 0.5 993.10 4.5 995.10 4.5 C997.10 4.5 998.10 0.5 1000.10 0.5 C1002.10 0.5 1003.10 4.5 1005.10 4.5 C1007.10 4.5 1008.10 0.5 1010.10 0.5 C1012.10 0.5 1013.10 4.5 1015.10 4.5 C1017.10 4.5 1018.10 0.5 1020.10 0.5 C1022.10 0.5 1023.10 4.5 1025.10 4.5 C1027.10 4.5 1028.10 0.5 1030.10 0.5 C1032.10 0.5 1033.10 4.5 1035.10 4.5 C1037.10 4.5 1038.10 0.5 1040.10 0.5 C1042.10 0.5 1043.10 4.5 1045.10 4.5 C1047.10 4.5 1048.10 0.5 1050.10 0.5 C1052.10 0.5 1053.10 4.5 1055.10 4.5 C1057.10 4.5 1058.10 0.5 1060.10 0.5 C1062.10 0.5 1063.10 4.5 1065.10 4.5 C1067.10 4.5 1068.10 0.5 1070.10 0.5 C1072.10 0.5 1073.10 4.5 1075.10 4.5 C1077.10 4.5 1078.10 0.5 1080.10 0.5 C1082.10 0.5 1083.10 4.5 1085.10 4.5 C1087.10 4.5 1088.10 0.5 1090.10 0.5 C1092.10 0.5 1093.10 4.5 1095.10 4.5 C1097.10 4.5 1098.10 0.5 1100.10 0.5 C1102.10 0.5 1103.10 4.5 1105.10 4.5 C1107.10 4.5 1108.10 0.5 1110.10 0.5 C1112.10 0.5 1113.10 4.5 1115.10 4.5 C1117.10 4.5 1118.10 0.5 1120.10 0.5 C1122.10 0.5 1123.10 4.5 1125.10 4.5 C1127.10 4.5 1128.10 0.5 1130.10 0.5 C1132.10 0.5 1133.10 4.5 1135.10 4.5 C1137.10 4.5 1138.10 0.5 1140.10 0.5 C1142.10 0.5 1143.10 4.5 1145.10 4.5 C1147.10 4.5 1148.10 0.5 1150.10 0.5 C1152.10 0.5 1153.10 4.5 1155.10 4.5 C1157.10 4.5 1158.10 0.5 1160.10 0.5 C1162.10 0.5 1163.10 4.5 1165.10 4.5 C1167.10 4.5 1168.10 0.5 1170.10 0.5 C1172.10 0.5 1173.10 4.5 1175.10 4.5 C1177.10 4.5 1178.10 0.5 1180.10 0.5 C1182.10 0.5 1183.10 4.5 1185.10 4.5 C1187.10 4.5 1188.10 0.5 1190.10 0.5 C1192.10 0.5 1193.10 4.5 1195.10 4.5 C1197.10 4.5 1198.10 0.5 1200.10 0.5 C1202.10 0.5 1203.10 4.5 1205.10 4.5 C1207.10 4.5 1208.10 0.5 1210.10 0.5 C1212.10 0.5 1213.10 4.5 1215.10 4.5 C1217.10 4.5 1218.10 0.5 1220.10 0.5 C1222.10 0.5 1223.10 4.5 1225.10 4.5 C1227.10 4.5 1228.10 0.5 1230.10 0.5 C1232.10 0.5 1233.10 4.5 1235.10 4.5 C1237.10 4.5 1238.10 0.5 1240.10 0.5 C1242.10 0.5 1243.10 4.5 1245.10 4.5 C1247.10 4.5 1248.10 0.5 1250.10 0.5 C1252.10 0.5 1253.10 4.5 1255.10 4.5 C1257.10 4.5 1258.10 0.5 1260.10 0.5 C1262.10 0.5 1263.10 4.5 1265.10 4.5 C1267.10 4.5 1268.10 0.5 1270.10 0.5 C1272.10 0.5 1273.10 4.5 1275.10 4.5 C1277.10 4.5 1278.10 0.5 1280.10 0.5 C1282.10 0.5 1283.10 4.5 1285.10 4.5 C1287.10 4.5 1288.10 0.5 1290.10 0.5 C1292.10 0.5 1293.10 4.5 1295.10 4.5 C1297.10 4.5 1298.10 0.5 1300.10 0.5 C1302.10 0.5 1303.10 4.5 1305.10 4.5 C1307.10 4.5 1308.10 0.5 1310.10 0.5" fill="none" stroke="#a9b1bb" stroke-width="1.15"/><path d="M0.5 0 L0.5 0.8 M1302.5 0 L1302.5 2.5" stroke="#a9b1bb" stroke-width="1"/></svg><div class="t" style="left:53.00px;top:17.44px;font-size:12px;line-height:12px;font-weight:400;color:#79879c;">Pod</div><div class="t" style="left:79.00px;top:17.44px;font-size:12px;line-height:12px;font-weight:700;color:#36435c;">prometheus-k8s-0</div><div class="t" style="left:191.00px;top:17.44px;font-size:12px;line-height:12px;font-weight:400;color:#79879c;">has consumed the following since creation:</div><div class="t" style="left:52.50px;top:48.79px;font-size:28px;line-height:28px;font-weight:700;color:#000;">75702.95</div><div class="t" style="left:53.00px;top:87.14px;font-size:12px;line-height:12px;font-weight:400;color:#242e42;">Total Cost ($)</div><div class="t" style="left:53.00px;top:128.67px;font-size:20px;line-height:20px;font-weight:700;color:#000;">52.716</div><div class="t" style="left:53.00px;top:153.94px;font-size:12px;line-height:12px;font-weight:400;color:#79879c;">CPU <b>(Core)</b></div><div class="t" style="left:262.00px;top:128.67px;font-size:20px;line-height:20px;font-weight:700;color:#000;">167.305</div><div class="t" style="left:262.00px;top:153.94px;font-size:12px;line-height:12px;font-weight:400;color:#79879c;">Memory <b>(Gi)</b></div><div class="t" style="left:471.00px;top:128.67px;font-size:20px;line-height:20px;font-weight:700;color:#000;">73102.627</div><div class="t" style="left:471.00px;top:153.94px;font-size:12px;line-height:12px;font-weight:400;color:#79879c;">Inbound Traffic <b>(M)</b></div><div class="t" style="left:53.00px;top:185.97px;font-size:20px;line-height:20px;font-weight:700;color:#000;">1684.720</div><div class="t" style="left:53.00px;top:211.24px;font-size:12px;line-height:12px;font-weight:400;color:#79879c;">Outbound Traffic <b>(M)</b></div><div class="r" style="left:686px;top:123px;width:1px;height:110px;background:#79879c;"></div><div class="t" style="left:728.00px;top:128.67px;font-size:20px;line-height:20px;font-weight:700;color:#000;">79.07</div><div class="t" style="left:728.00px;top:153.94px;font-size:12px;line-height:12px;font-weight:400;color:#79879c;">CPU <b>($)</b></div><div class="t" style="left:927.00px;top:128.67px;font-size:20px;line-height:20px;font-weight:700;color:#000;">836.53</div><div class="t" style="left:927.00px;top:153.94px;font-size:12px;line-height:12px;font-weight:400;color:#79879c;">Memory <b>($)</b></div><div class="t" style="left:1125.00px;top:128.67px;font-size:20px;line-height:20px;font-weight:700;color:#000;">73102.63</div><div class="t" style="left:1125.00px;top:153.94px;font-size:12px;line-height:12px;font-weight:400;color:#79879c;">Inbound Traffic <b>($)</b></div><div class="t" style="left:728.00px;top:185.97px;font-size:20px;line-height:20px;font-weight:700;color:#000;">1684.72</div><div class="t" style="left:728.00px;top:211.24px;font-size:12px;line-height:12px;font-weight:400;color:#79879c;">Outbound Traffic <b>($)</b></div><div class="t" style="left:40.00px;top:275.07px;font-size:20px;line-height:20px;font-weight:700;color:#242e42;">Consumption History</div><div class="t" style="left:40.00px;top:317.84px;font-size:12px;line-height:12px;font-weight:400;color:#36435c;">Billing Cycle</div><div class="t" style="left:726.00px;top:318.04px;font-size:12px;line-height:12px;font-weight:700;color:#36435c;">Apr. 19, 2022 00:00</div><div class="t" style="left:726.00px;top:338.74px;font-size:12px;line-height:12px;font-weight:400;color:#79879c;">Start Time</div><div class="t" style="left:989.50px;top:318.04px;font-size:12px;line-height:12px;font-weight:700;color:#36435c;">Apr. 26, 2022 00:00</div><div class="t" style="left:989.50px;top:338.74px;font-size:12px;line-height:12px;font-weight:400;color:#79879c;">End Time</div><svg style="left:923px;top:319px" width="14" height="12" viewBox="0 0 14 12"><rect x="0" y="4.5" width="14" height="6.6" rx="1.2" fill="#b6c1cc"/><rect x="0" y="4.5" width="14" height="2" fill="#b6c1cc"/><rect x="0" y="1.8" width="14" height="3.2" fill="#36435c"/><rect x="2.3" y="0.2" width="1.6" height="2" fill="#36435c"/><rect x="10.1" y="0.2" width="1.6" height="2" fill="#36435c"/></svg><svg style="left:1186px;top:319px" width="14" height="12" viewBox="0 0 14 12"><rect x="0" y="4.5" width="14" height="6.6" rx="1.2" fill="#b6c1cc"/><rect x="0" y="4.5" width="14" height="2" fill="#b6c1cc"/><rect x="0" y="1.8" width="14" height="3.2" fill="#36435c"/><rect x="2.3" y="0.2" width="1.6" height="2" fill="#36435c"/><rect x="10.1" y="0.2" width="1.6" height="2" fill="#36435c"/></svg><div class="t" style="left:1253.00px;top:318.04px;font-size:12px;line-height:12px;font-weight:700;color:#36435c;">1 hour</div><svg style="left:1317px;top:319px" width="12" height="10" viewBox="0 0 12 10"><path d="M1.5 2.5 L6 7 L10.5 2.5" fill="none" stroke="#36435c" stroke-width="1.4"/></svg><div class="t" style="left:1253.00px;top:337.64px;font-size:12px;line-height:12px;font-weight:400;color:#79879c;">Sampling</div><div class="t" style="left:1253.00px;top:359.04px;font-size:12px;line-height:12px;font-weight:400;color:#79879c;">Interval</div><div class="r" style="left:40px;top:366px;width:1303px;height:247px;background:#f9fbfd;border:1px solid #d8dee5;box-sizing:border-box;"></div><div class="t" style="left:54.00px;top:378.54px;font-size:12px;line-height:12px;font-weight:700;color:#36435c;">Cost Trends ($)</div><div class="r" style="left:1002px;top:384px;width:6px;height:6px;border-radius:50%;background:#55bc8a;"></div><div class="t" style="left:1016.50px;top:380.64px;font-size:12px;line-height:12px;font-weight:400;color:#465166;">CPU</div><div class="r" style="left:1049px;top:384px;width:6px;height:6px;border-radius:50%;background:#3a9bd5;"></div><div class="t" style="left:1063.50px;top:380.64px;font-size:12px;line-height:12px;font-weight:400;color:#465166;">Memory</div><div class="r" style="left:1114px;top:384px;width:6px;height:6px;border-radius:50%;background:#f5a623;"></div><div class="t" style="left:1128.50px;top:380.64px;font-size:12px;line-height:12px;font-weight:400;color:#465166;">Inbound Traffic</div><div class="r" style="left:1216px;top:384px;width:6px;height:6px;border-radius:50%;background:#ca2621;"></div><div class="t" style="left:1230.00px;top:380.64px;font-size:12px;line-height:12px;font-weight:400;color:#465166;">Outbound Traffic</div><svg style="left:40px;top:366px" width="1303" height="247" viewBox="0 0 1303 247"><path d="M59.00 195.00 L66.37 195.00 L73.73 195.00 L81.10 97.20 L88.46 97.20 L95.83 97.20 L103.19 97.20 L110.56 97.20 L117.92 97.20 L125.29 98.40 L132.65 100.30 L140.02 98.40 L147.38 101.80 L154.75 96.70 L162.11 98.40 L169.48 96.40 L176.84 96.40 L184.21 96.40 L191.57 96.40 L198.94 96.40 L206.31 96.40 L213.67 96.40 L221.04 96.40 L228.40 96.40 L235.77 96.40 L243.13 96.40 L250.50 96.40 L257.86 98.00 L265.23 96.40 L272.59 96.40 L279.96 96.40 L287.32 96.40 L294.69 96.40 L302.05 99.40 L309.42 97.50 L316.78 96.00 L324.15 96.00 L331.51 96.00 L338.88 97.20 L346.25 104.00 L353.61 118.80 L360.98 118.80 L368.34 118.80 L375.71 118.80 L383.07 118.80 L390.44 118.80 L397.80 119.70 L405.17 118.80 L412.53 118.60 L419.90 118.40 L427.26 119.70 L434.63 118.80 L441.99 118.20 L449.36 119.70 L456.72 118.40 L464.09 118.40 L471.46 118.40 L478.82 118.40 L486.19 118.40 L493.55 118.40 L500.92 118.40 L508.28 118.40 L515.65 118.40 L523.01 118.40 L530.38 118.40 L537.74 118.40 L545.11 118.40 L552.47 118.40 L559.84 118.40 L567.20 118.40 L574.57 118.40 L581.93 118.40 L589.30 118.40 L596.66 118.40 L604.03 118.40 L611.40 118.40 L618.76 118.40 L626.13 118.40 L633.49 118.40 L640.86 118.40 L648.22 118.40 L655.59 117.30 L662.95 109.20 L670.32 74.80 L677.68 71.30 L685.05 73.40 L692.41 72.50 L699.78 74.00 L707.14 72.00 L714.51 72.00 L721.87 72.00 L729.24 72.00 L736.60 74.20 L743.97 72.00 L751.34 72.00 L758.70 72.00 L766.07 72.00 L773.43 72.00 L780.80 72.00 L788.16 74.00 L795.53 72.00 L802.89 72.00 L810.26 72.00 L817.62 72.00 L824.99 72.00 L832.35 72.00 L839.72 74.00 L847.08 72.00 L854.45 72.00 L861.81 72.00 L869.18 72.00 L876.54 72.00 L883.91 72.00 L891.28 72.00 L898.64 74.00 L906.01 72.00 L913.37 72.00 L920.74 72.00 L928.10 72.00 L935.47 72.00 L942.83 72.00 L950.20 72.00 L957.56 72.00 L964.93 72.00 L972.29 72.00 L979.66 72.00 L987.02 72.00 L994.39 72.00 L1001.75 73.50 L1009.12 73.50 L1016.49 72.00 L1023.85 72.00 L1031.22 72.00 L1038.58 72.00 L1045.95 72.00 L1053.31 72.00 L1060.68 72.00 L1068.04 74.00 L1075.41 72.00 L1082.77 74.00 L1090.14 72.00 L1097.50 72.00 L1104.87 72.00 L1112.23 74.00 L1119.60 72.00 L1126.96 72.00 L1134.33 72.00 L1141.69 72.00 L1149.06 72.00 L1156.43 72.00 L1163.79 72.00 L1171.16 72.00 L1178.52 72.00 L1185.89 72.00 L1193.25 72.00 L1200.62 71.30 L1207.98 70.30 L1215.35 70.00 L1222.71 66.50 L1230.08 75.20 L1237.44 72.00 L1244.81 72.00 L1252.17 72.00 L1259.54 72.00 L1266.90 74.00 L1274.27 72.00 L1281.63 72.00 L1289.00 72.00 L1289.00 195.00 L59.00 195.00 Z" fill="#f9f0e3"/><line x1="59.0" y1="43.0" x2="1289.0" y2="43.0" stroke="#d3d9e0" stroke-width="1" stroke-dasharray="2 2.1"/><line x1="59.0" y1="81.20000000000005" x2="1289.0" y2="81.20000000000005" stroke="#d3d9e0" stroke-width="1" stroke-dasharray="2 2.1"/><line x1="59.0" y1="119.39999999999998" x2="1289.0" y2="119.39999999999998" stroke="#d3d9e0" stroke-width="1" stroke-dasharray="2 2.1"/><line x1="59.0" y1="157.60000000000002" x2="1289.0" y2="157.60000000000002" stroke="#d3d9e0" stroke-width="1" stroke-dasharray="2 2.1"/><path d="M59.0 195.79999999999995 L1289.0 195.79999999999995" stroke="#9fd9c3" stroke-width="1" fill="none"/><path d="M59.0 195.20000000000005 L1289.0 195.20000000000005" stroke="#3a9bd5" stroke-width="0.8" fill="none" opacity="0.6"/><path d="M59.00 195.50 L66.37 195.50 L73.73 195.50 L81.10 194.60 L88.46 193.90 L95.83 193.90 L103.19 193.90 L110.56 193.90 L117.92 193.90 L125.29 193.90 L132.65 193.90 L140.02 193.90 L147.38 193.90 L154.75 193.90 L162.11 193.90 L169.48 193.90 L176.84 193.90 L184.21 193.90 L191.57 193.90 L198.94 193.90 L206.31 193.90 L213.67 193.90 L221.04 193.90 L228.40 193.90 L235.77 193.90 L243.13 193.90 L250.50 193.90 L257.86 193.90 L265.23 193.90 L272.59 193.90 L279.96 193.90 L287.32 193.90 L294.69 193.90 L302.05 193.90 L309.42 193.90 L316.78 193.90 L324.15 193.90 L331.51 193.90 L338.88 193.90 L346.25 193.90 L353.61 193.90 L360.98 193.90 L368.34 193.90 L375.71 193.90 L383.07 193.90 L390.44 193.90 L397.80 193.90 L405.17 193.90 L412.53 193.90 L419.90 193.90 L427.26 193.90 L434.63 193.90 L441.99 193.90 L449.36 193.90 L456.72 193.90 L464.09 193.90 L471.46 193.90 L478.82 193.90 L486.19 193.90 L493.55 193.90 L500.92 193.90 L508.28 193.90 L515.65 193.90 L523.01 193.90 L530.38 193.90 L537.74 193.90 L545.11 193.90 L552.47 193.90 L559.84 193.90 L567.20 193.90 L574.57 193.90 L581.93 193.90 L589.30 193.90 L596.66 193.90 L604.03 193.90 L611.40 193.90 L618.76 193.90 L626.13 193.90 L633.49 193.90 L640.86 193.90 L648.22 193.90 L655.59 193.90 L662.95 193.90 L670.32 193.90 L677.68 193.90 L685.05 193.90 L692.41 193.90 L699.78 193.90 L707.14 193.90 L714.51 193.90 L721.87 193.90 L729.24 193.90 L736.60 193.90 L743.97 193.90 L751.34 193.90 L758.70 193.90 L766.07 193.90 L773.43 193.90 L780.80 193.90 L788.16 193.90 L795.53 193.90 L802.89 193.90 L810.26 193.90 L817.62 193.90 L824.99 193.90 L832.35 193.90 L839.72 193.90 L847.08 193.90 L854.45 193.90 L861.81 193.90 L869.18 193.90 L876.54 193.90 L883.91 193.90 L891.28 193.90 L898.64 193.90 L906.01 193.90 L913.37 193.90 L920.74 193.90 L928.10 193.90 L935.47 193.90 L942.83 193.90 L950.20 193.90 L957.56 193.90 L964.93 193.90 L972.29 193.90 L979.66 193.90 L987.02 193.90 L994.39 193.90 L1001.75 193.90 L1009.12 193.90 L1016.49 193.90 L1023.85 193.90 L1031.22 193.90 L1038.58 193.90 L1045.95 193.90 L1053.31 193.90 L1060.68 193.90 L1068.04 193.90 L1075.41 193.90 L1082.77 193.90 L1090.14 193.90 L1097.50 193.90 L1104.87 193.90 L1112.23 193.90 L1119.60 193.90 L1126.96 193.90 L1134.33 193.90 L1141.69 193.90 L1149.06 193.90 L1156.43 193.90 L1163.79 193.90 L1171.16 193.90 L1178.52 193.90 L1185.89 193.90 L1193.25 193.90 L1200.62 193.90 L1207.98 193.90 L1215.35 193.90 L1222.71 193.90 L1230.08 193.90 L1237.44 193.90 L1244.81 193.90 L1252.17 193.90 L1259.54 193.90 L1266.90 193.90 L1274.27 193.90 L1281.63 193.90 L1289.00 193.90" stroke="#8f3e3b" stroke-width="1.4" fill="none"/><path d="M59.00 195.00 L66.37 195.00 L73.73 195.00 L81.10 97.20 L88.46 97.20 L95.83 97.20 L103.19 97.20 L110.56 97.20 L117.92 97.20 L125.29 98.40 L132.65 100.30 L140.02 98.40 L147.38 101.80 L154.75 96.70 L162.11 98.40 L169.48 96.40 L176.84 96.40 L184.21 96.40 L191.57 96.40 L198.94 96.40 L206.31 96.40 L213.67 96.40 L221.04 96.40 L228.40 96.40 L235.77 96.40 L243.13 96.40 L250.50 96.40 L257.86 98.00 L265.23 96.40 L272.59 96.40 L279.96 96.40 L287.32 96.40 L294.69 96.40 L302.05 99.40 L309.42 97.50 L316.78 96.00 L324.15 96.00 L331.51 96.00 L338.88 97.20 L346.25 104.00 L353.61 118.80 L360.98 118.80 L368.34 118.80 L375.71 118.80 L383.07 118.80 L390.44 118.80 L397.80 119.70 L405.17 118.80 L412.53 118.60 L419.90 118.40 L427.26 119.70 L434.63 118.80 L441.99 118.20 L449.36 119.70 L456.72 118.40 L464.09 118.40 L471.46 118.40 L478.82 118.40 L486.19 118.40 L493.55 118.40 L500.92 118.40 L508.28 118.40 L515.65 118.40 L523.01 118.40 L530.38 118.40 L537.74 118.40 L545.11 118.40 L552.47 118.40 L559.84 118.40 L567.20 118.40 L574.57 118.40 L581.93 118.40 L589.30 118.40 L596.66 118.40 L604.03 118.40 L611.40 118.40 L618.76 118.40 L626.13 118.40 L633.49 118.40 L640.86 118.40 L648.22 118.40 L655.59 117.30 L662.95 109.20 L670.32 74.80 L677.68 71.30 L685.05 73.40 L692.41 72.50 L699.78 74.00 L707.14 72.00 L714.51 72.00 L721.87 72.00 L729.24 72.00 L736.60 74.20 L743.97 72.00 L751.34 72.00 L758.70 72.00 L766.07 72.00 L773.43 72.00 L780.80 72.00 L788.16 74.00 L795.53 72.00 L802.89 72.00 L810.26 72.00 L817.62 72.00 L824.99 72.00 L832.35 72.00 L839.72 74.00 L847.08 72.00 L854.45 72.00 L861.81 72.00 L869.18 72.00 L876.54 72.00 L883.91 72.00 L891.28 72.00 L898.64 74.00 L906.01 72.00 L913.37 72.00 L920.74 72.00 L928.10 72.00 L935.47 72.00 L942.83 72.00 L950.20 72.00 L957.56 72.00 L964.93 72.00 L972.29 72.00 L979.66 72.00 L987.02 72.00 L994.39 72.00 L1001.75 73.50 L1009.12 73.50 L1016.49 72.00 L1023.85 72.00 L1031.22 72.00 L1038.58 72.00 L1045.95 72.00 L1053.31 72.00 L1060.68 72.00 L1068.04 74.00 L1075.41 72.00 L1082.77 74.00 L1090.14 72.00 L1097.50 72.00 L1104.87 72.00 L1112.23 74.00 L1119.60 72.00 L1126.96 72.00 L1134.33 72.00 L1141.69 72.00 L1149.06 72.00 L1156.43 72.00 L1163.79 72.00 L1171.16 72.00 L1178.52 72.00 L1185.89 72.00 L1193.25 72.00 L1200.62 71.30 L1207.98 70.30 L1215.35 70.00 L1222.71 66.50 L1230.08 75.20 L1237.44 72.00 L1244.81 72.00 L1252.17 72.00 L1259.54 72.00 L1266.90 74.00 L1274.27 72.00 L1281.63 72.00 L1289.00 72.00" stroke="#f0ad4e" stroke-width="1" fill="none" stroke-linejoin="round"/></svg><div class="t" style="left:91.00px;top:402.64px;font-size:12px;line-height:12px;font-weight:400;color:#5f646d;transform:translateX(-100%);">600</div><div class="t" style="left:91.00px;top:441.74px;font-size:12px;line-height:12px;font-weight:400;color:#5f646d;transform:translateX(-100%);">450</div><div class="t" style="left:91.00px;top:479.94px;font-size:12px;line-height:12px;font-weight:400;color:#5f646d;transform:translateX(-100%);">300</div><div class="t" style="left:91.00px;top:518.14px;font-size:12px;line-height:12px;font-weight:400;color:#5f646d;transform:translateX(-100%);">150</div><div class="t" style="left:112.20px;top:579.44px;font-size:12px;line-height:12px;font-weight:400;color:#5f646d;transform:translateX(-50%);">04-19 01:00</div><div class="t" style="left:224.40px;top:579.44px;font-size:12px;line-height:12px;font-weight:400;color:#5f646d;transform:translateX(-50%);">04-19 18:00</div><div class="t" style="left:349.40px;top:579.44px;font-size:12px;line-height:12px;font-weight:400;color:#5f646d;transform:translateX(-50%);">04-20 11:00</div><div class="t" style="left:474.60px;top:579.44px;font-size:12px;line-height:12px;font-weight:400;color:#5f646d;transform:translateX(-50%);">04-21 04:00</div><div class="t" style="left:599.80px;top:579.44px;font-size:12px;line-height:12px;font-weight:400;color:#5f646d;transform:translateX(-50%);">04-21 21:00</div><div class="t" style="left:725.00px;top:579.44px;font-size:12px;line-height:12px;font-weight:400;color:#5f646d;transform:translateX(-50%);">04-22 14:00</div><div class="t" style="left:850.20px;top:579.44px;font-size:12px;line-height:12px;font-weight:400;color:#5f646d;transform:translateX(-50%);">04-23 07:00</div><div class="t" style="left:975.40px;top:579.44px;font-size:12px;line-height:12px;font-weight:400;color:#5f646d;transform:translateX(-50%);">04-24 00:00</div><div class="t" style="left:1100.60px;top:579.44px;font-size:12px;line-height:12px;font-weight:400;color:#5f646d;transform:translateX(-50%);">04-24 17:00</div><div class="t" style="left:1297.00px;top:579.44px;font-size:12px;line-height:12px;font-weight:400;color:#5f646d;transform:translateX(-50%);">04-26 00:00</div><div class="r" style="left:40px;top:625px;width:1303px;height:200px;background:#fff;border:1px solid #d8dee5;border-radius:4px 4px 0 0;box-sizing:border-box;"></div><div class="r" style="left:41px;top:666px;width:1301px;height:1px;background:#d8dee5;"></div><div class="r" style="left:41px;top:667px;width:1301px;height:39px;background:#f9fbfd;"></div><div class="r" style="left:41px;top:706px;width:1301px;height:1px;background:#d8dee5;"></div><div class="r" style="left:41px;top:746px;width:1301px;height:1px;background:#d8dee5;"></div><div class="r" style="left:41px;top:747px;width:1301px;height:40px;background:#f9fbfd;"></div><div class="t" style="left:57.50px;top:639.84px;font-size:12px;line-height:12px;font-weight:700;color:#36435c;">Resource Type</div><div class="t" style="left:289.00px;top:639.84px;font-size:12px;line-height:12px;font-weight:700;color:#36435c;">Maximum Usage</div><div class="t" style="left:506.00px;top:639.84px;font-size:12px;line-height:12px;font-weight:700;color:#36435c;">Minimum Usage</div><div class="t" style="left:719.00px;top:639.84px;font-size:12px;line-height:12px;font-weight:700;color:#36435c;">Average Usage</div><div class="t" style="left:922.00px;top:639.84px;font-size:12px;line-height:12px;font-weight:700;color:#36435c;">Total Consumption</div><div class="t" style="left:1200.00px;top:639.84px;font-size:12px;line-height:12px;font-weight:700;color:#36435c;">Cost</div><svg style="left:1038px;top:639px" width="12" height="12" viewBox="0 0 12 12"><circle cx="6" cy="6" r="6" fill="#b6c1cc"/><path d="M4.2 4.6 C4.2 3.4 5 2.8 6 2.8 C7 2.8 7.8 3.4 7.8 4.4 C7.8 5.5 6.4 5.7 6.1 6.6 L6.1 7.2" fill="none" stroke="#79879c" stroke-width="1.2"/><rect x="5.4" y="8.2" width="1.3" height="1.2" fill="#79879c"/></svg><div class="r" style="left:57.89999999999998px;top:684.9px;width:6px;height:6px;border-radius:50%;background:#55bc8a;"></div><div class="t" style="left:71.50px;top:680.84px;font-size:12px;line-height:12px;font-weight:400;color:#36435c;">CPU</div><div class="t" style="left:289.00px;top:680.84px;font-size:12px;line-height:12px;font-weight:400;color:#36435c;">0.3 Core</div><div class="t" style="left:506.00px;top:680.84px;font-size:12px;line-height:12px;font-weight:400;color:#36435c;">0.3 Core</div><div class="t" style="left:719.00px;top:680.84px;font-size:12px;line-height:12px;font-weight:400;color:#36435c;">0.3 Core</div><div class="t" style="left:922.00px;top:680.84px;font-size:12px;line-height:12px;font-weight:400;color:#36435c;">49.5 Core</div><div class="t" style="left:1200.00px;top:680.84px;font-size:12px;line-height:12px;font-weight:400;color:#36435c;">$ 74.25</div><div class="r" style="left:57.89999999999998px;top:724.9px;width:6px;height:6px;border-radius:50%;background:#3a9bd5;"></div><div class="t" style="left:71.50px;top:720.84px;font-size:12px;line-height:12px;font-weight:400;color:#36435c;">Memory</div><div class="t" style="left:289.00px;top:720.84px;font-size:12px;line-height:12px;font-weight:400;color:#36435c;">1.932 Gi</div><div class="t" style="left:506.00px;top:720.84px;font-size:12px;line-height:12px;font-weight:400;color:#36435c;">0.807 Gi</div><div class="t" style="left:719.00px;top:720.84px;font-size:12px;line-height:12px;font-weight:400;color:#36435c;">0.944 Gi</div><div class="t" style="left:922.00px;top:720.84px;font-size:12px;line-height:12px;font-weight:400;color:#36435c;">155.765 Gi</div><div class="t" style="left:1200.00px;top:720.84px;font-size:12px;line-height:12px;font-weight:400;color:#36435c;">$ 778.82</div><div class="r" style="left:57.89999999999998px;top:764.9px;width:6px;height:6px;border-radius:50%;background:#f5a623;"></div><div class="t" style="left:71.50px;top:760.84px;font-size:12px;line-height:12px;font-weight:400;color:#36435c;">Inbound Traffic</div><div class="t" style="left:289.00px;top:760.84px;font-size:12px;line-height:12px;font-weight:400;color:#36435c;">506.472 M</div><div class="t" style="left:506.00px;top:760.84px;font-size:12px;line-height:12px;font-weight:400;color:#36435c;">308.158 M</div><div class="t" style="left:719.00px;top:760.84px;font-size:12px;line-height:12px;font-weight:400;color:#36435c;">414.561 M</div><div class="t" style="left:922.00px;top:760.84px;font-size:12px;line-height:12px;font-weight:400;color:#36435c;">69402.556 M</div><div class="t" style="left:1200.00px;top:760.84px;font-size:12px;line-height:12px;font-weight:400;color:#36435c;">$ 69402.56</div></div><div class="r" style="left:1846px;top:135px;width:17px;height:764px;background:#f1f1f1;"></div><div class="r" style="left:1848px;top:152px;width:13px;height:659px;background:#c1c1c1;"></div><svg style="left:1846px;top:135px" width="17" height="17" viewBox="0 0 17 17"><path d="M4.5 11 L8.5 7 L12.5 11 Z" fill="#a3a3a3"/></svg><svg style="left:1846px;top:882px" width="17" height="17" viewBox="0 0 17 17"><path d="M4.5 6.5 L8.5 10.5 L12.5 6.5 Z" fill="#505050"/></svg></body></html>
